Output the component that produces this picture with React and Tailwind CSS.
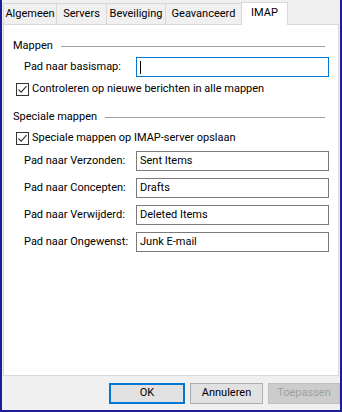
import React from 'react';

const TABS = [
    { name: 'Algemeen', w: 'w-[54px]' },
    { name: 'Servers', w: 'w-[51px]' },
    { name: 'Beveiliging', w: 'w-[60px]' },
    { name: 'Geavanceerd', w: 'w-[77px]' },
];

const PATHS = [
    { label: 'Pad naar Verzonden:', value: 'Sent Items' },
    { label: 'Pad naar Concepten:', value: 'Drafts' },
    { label: 'Pad naar Verwijderd:', value: 'Deleted Items' },
    { label: 'Pad naar Ongewenst:', value: 'Junk E-mail' },
];

// Win10-style checked box
function Check({ label }) {
    return (
        <div className="flex items-center h-[16px] pl-[12px]">
            <span className="w-[13px] h-[13px] border border-[#333] bg-white flex items-center justify-center">
                <svg width="11" height="11" viewBox="0 0 11 11">
                    <path d="M1.5 5.5 L4.2 8.2 L9.5 2.2" fill="none" stroke="#333" strokeWidth="1.1" />
                </svg>
            </span>
            <span className="ml-[3px]">{label}</span>
        </div>
    );
}

function GroupTitle({ children }) {
    return (
        <div className="flex items-center h-[14px] pl-[9px] pr-[13px]">
            <span>{children}</span>
            <span className="flex-1 ml-[8px] h-px bg-[#a0a0a0]" />
        </div>
    );
}

function Field({ label, value, focused }) {
    return (
        <div className="flex items-center h-[20px] pl-[20px] pr-[9px]">
            <span className="w-[112px] whitespace-nowrap">{label}</span>
            <div className={`flex-1 h-[20px] border flex items-center px-[3px] bg-white ${focused ? 'border-[#0078d7]' : 'border-[#7a7a7a]'}`}>
                {focused ? <span className="w-px h-[13px] bg-black" /> : value}
            </div>
        </div>
    );
}

export default function App() {
    return (
        <div className="w-[342px] h-[412px] bg-[#f0f0f0] border-x-2 border-b-2 border-[#1c1c9c] text-[11px] text-black flex flex-col"
            style={{ fontFamily: 'Roboto, "Liberation Sans", Arial, sans-serif' }}>
            <div className="flex items-end h-[24px] pl-[1px] pr-[2px]">
                {TABS.map((t) => (
                    <div key={t.name} className={`${t.w} h-[21px] border border-b-0 border-[#d9d9d9] -ml-px first:ml-0 flex items-center justify-center bg-[#f0f0f0]`}>{t.name}</div>
                ))}
                <div className="w-[47px] h-[23px] -ml-px border border-b-0 border-[#d9d9d9] bg-white flex items-start justify-center pt-[2px] relative top-px">IMAP</div>
            </div>
            <div className="mx-[1px] h-[352px] bg-white border border-[#d9d9d9] flex flex-col pt-[14px]">
                <GroupTitle>Mappen</GroupTitle>
                <div className="mt-[4px]"><Field label="Pad naar basismap:" focused /></div>
                <div className="mt-[4px]"><Check label="Controleren op nieuwe berichten in alle mappen" /></div>
                <div className="mt-[13px]"><GroupTitle>Speciale mappen</GroupTitle></div>
                <div className="mt-[6px]"><Check label="Speciale mappen op IMAP-server opslaan" /></div>
                <div className="flex flex-col gap-[7px] mt-[5px]">
                    {PATHS.map((p) => <Field key={p.label} label={p.label} value={p.value} />)}
                </div>
            </div>
            <div className="flex-1 flex items-center justify-end gap-[5px]">
                <button className="w-[76px] h-[21px] bg-[#e1e1e1] border-2 border-[#0078d7]">OK</button>
                <button className="w-[73px] h-[21px] bg-[#e1e1e1] border border-[#adadad]">Annuleren</button>
                <button className="w-[72px] h-[21px] bg-[#cccccc] border border-[#bfbfbf] text-[#a0a0a0]">Toepassen</button>
            </div>
        </div>
    );
}
